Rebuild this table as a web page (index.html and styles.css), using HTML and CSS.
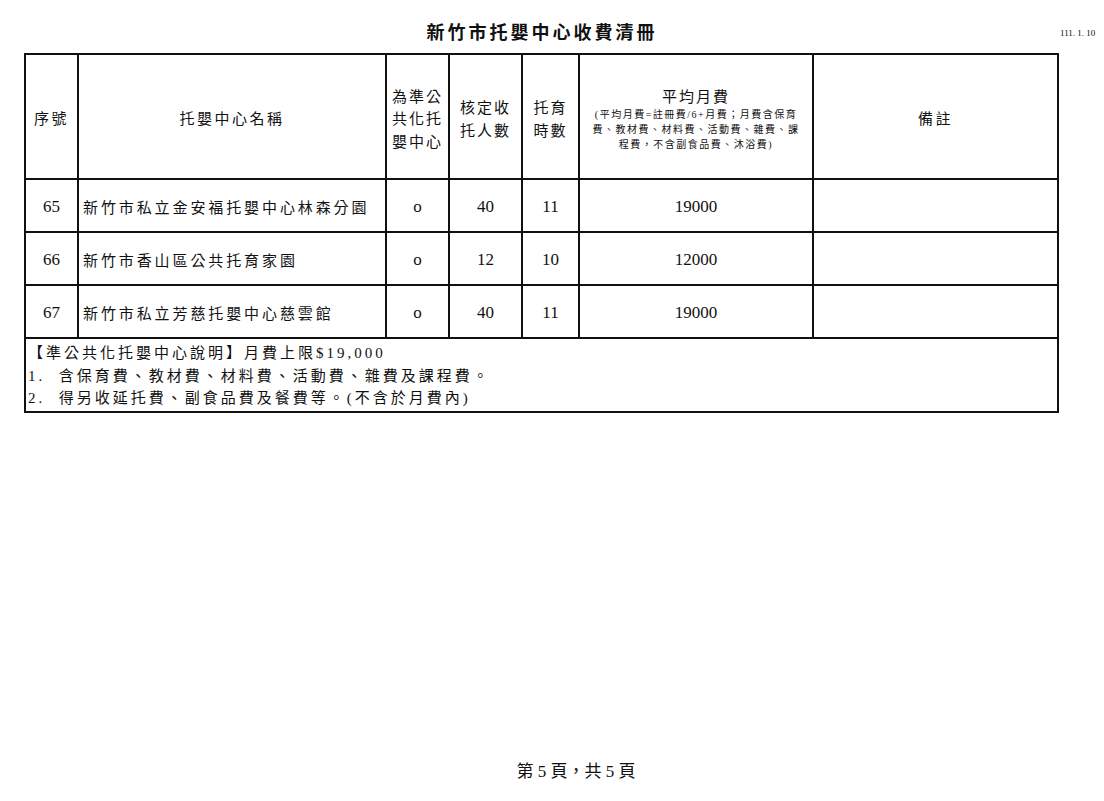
FILE: index.html
```html
<!DOCTYPE html>
<html lang="zh-Hant">
<head>
<meta charset="utf-8">
<title>新竹市托嬰中心收費清冊</title>
<link rel="stylesheet" href="styles.css">
</head>
<body>
<div class="page">
  <div class="top">
    <h1 class="title">新竹市托嬰中心收費清冊</h1>
    <div class="date">111. 1. 10</div>
  </div>
  <table class="sheet">
    <colgroup>
      <col class="c-no"><col class="c-name"><col class="c-pub"><col class="c-cap"><col class="c-hr"><col class="c-fee"><col class="c-note">
    </colgroup>
    <thead>
      <tr class="head">
        <th class="cjk">序號</th>
        <th class="cjk">托嬰中心名稱</th>
        <th class="cjk stack">為準公<br>共化托<br>嬰中心</th>
        <th class="cjk stack">核定收<br>托人數</th>
        <th class="cjk stack">托育<br>時數</th>
        <th class="fee-head">
          <div class="fee-title">平均月費</div>
          <div class="fee-sub">(平均月費=註冊費/6+月費；月費含保育<br>費、教材費、材料費、活動費、雜費、課<br>程費，不含副食品費、沐浴費)</div>
        </th>
        <th class="cjk">備註</th>
      </tr>
    </thead>
    <tbody>
      <tr class="row">
        <td class="num">65</td><td class="name">新竹市私立金安福托嬰中心林森分園</td><td class="mark">o</td><td class="num">40</td><td class="num">11</td><td class="num">19000</td><td></td>
      </tr>
      <tr class="row">
        <td class="num">66</td><td class="name">新竹市香山區公共托育家園</td><td class="mark">o</td><td class="num">12</td><td class="num">10</td><td class="num">12000</td><td></td>
      </tr>
      <tr class="row">
        <td class="num">67</td><td class="name">新竹市私立芳慈托嬰中心慈雲館</td><td class="mark">o</td><td class="num">40</td><td class="num">11</td><td class="num">19000</td><td></td>
      </tr>
      <tr class="notes">
        <td colspan="7">
          <div>【準公共化托嬰中心說明】月費上限$19,000</div>
          <div>1.&nbsp; 含保育費、教材費、材料費、活動費、雜費及課程費。</div>
          <div>2.&nbsp; 得另收延托費、副食品費及餐費等。(不含於月費內)</div>
        </td>
      </tr>
    </tbody>
  </table>
  <div class="footer">第 5 頁，共 5 頁</div>
</div>
</body>
</html>
```

FILE: styles.css
```css
html, body {
  margin: 0;
  padding: 0;
  background: #ffffff;
}

body {
  font-family: "Liberation Serif", "Noto Sans CJK TC", serif;
  color: #111111;
}

.page {
  width: 1104px;
  height: 801px;
  display: flex;
  flex-direction: column;
}

.top {
  display: flex;
  align-items: flex-start;
  padding: 22px 0 0 24px;
  height: 31px;
}

.title {
  width: 1033px;
  margin: 0;
  text-align: center;
  font-size: 18px;
  line-height: 22px;
  font-weight: bold;
  letter-spacing: 3px;
  padding-left: 3px;
  box-sizing: border-box;
}

.date {
  font-size: 9px;
  line-height: 22px;
  margin-left: 3px;
  letter-spacing: 0;
}

.sheet {
  margin-left: 24px;
  width: 1034px;
  border-collapse: collapse;
  table-layout: fixed;
  border: 2px solid #111111;
}

.c-no { width: 53px; }
.c-name { width: 308px; }
.c-pub { width: 63px; }
.c-cap { width: 73px; }
.c-hr { width: 57px; }
.c-fee { width: 234px; }
.c-note { width: 245px; }

.sheet th,
.sheet td {
  border: 2px solid #111111;
  padding: 0;
  vertical-align: middle;
  text-align: center;
  font-weight: normal;
}

.head th {
  height: 117px;
  padding-top: 6px;
}

.cjk {
  font-size: 15px;
  line-height: 22.5px;
  letter-spacing: 2.5px;
}

.stack {
  letter-spacing: 2px;
}

.fee-head {
  padding-bottom: 0;
}

.fee-title {
  font-size: 15px;
  line-height: 20px;
  letter-spacing: 2px;
}

.fee-sub {
  font-size: 10px;
  line-height: 15px;
  letter-spacing: 1.5px;
}

.row td {
  height: 49px;
  padding-top: 2px;
}

.num {
  font-size: 17px;
}

.mark {
  font-size: 17px;
}

.name {
  text-align: left !important;
  padding-left: 4px !important;
  font-size: 15px;
  letter-spacing: 2.9px;
  white-space: nowrap;
}

.notes td {
  text-align: left;
  font-size: 15px;
  line-height: 22.5px;
  letter-spacing: 3px;
  padding: 3px 2px 1px;
}

.footer {
  margin-top: auto;
  margin-bottom: 18px;
  padding-left: 48px;
  text-align: center;
  font-size: 17px;
  line-height: 22px;
  letter-spacing: 0;
}
```
